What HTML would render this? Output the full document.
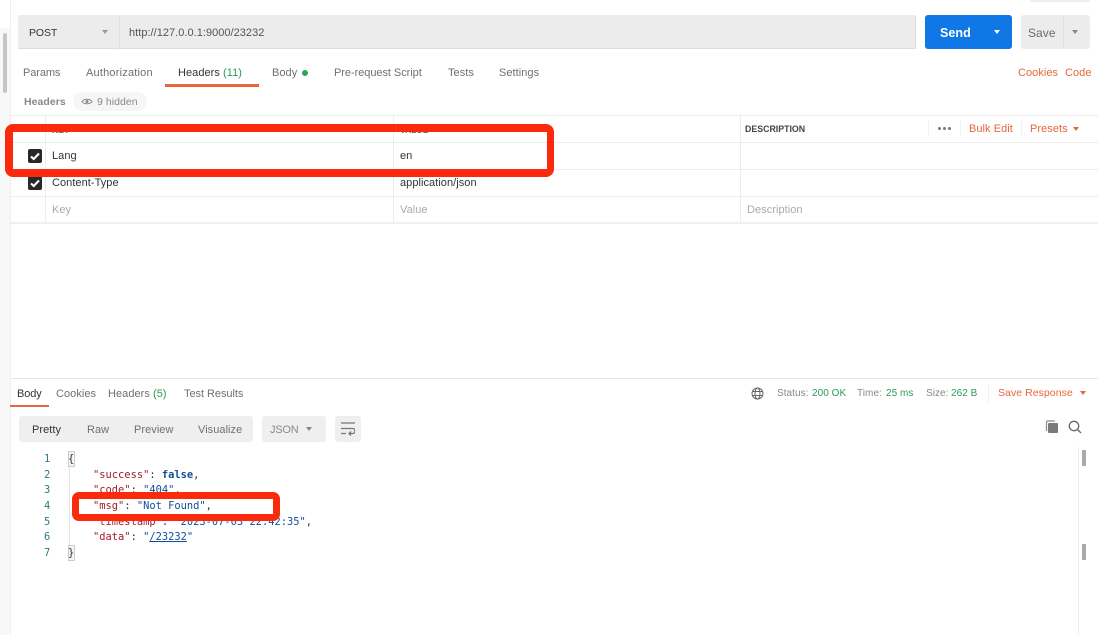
<!DOCTYPE html>
<html><head><meta charset="utf-8"><style>
html,body{margin:0;padding:0;background:#fff}
body{position:relative;width:1098px;height:635px;overflow:hidden;font-family:"Liberation Sans",sans-serif;font-size:11px;color:#707070}
#w{position:absolute;left:0;top:0;width:1098px;height:635px;overflow:hidden;filter:blur(.3px)}
.t{position:absolute;white-space:nowrap;line-height:14px;letter-spacing:.05px}
.b{position:absolute}
.o{color:#e9663c}.g{color:#2a9a5c}.d{color:#333}.h{color:#aaa}
.c{position:absolute;left:68px;white-space:pre;font:10.4px/14px "DejaVu Sans Mono",monospace;color:#333}
.n{position:absolute;white-space:pre;font:10.4px/14px "DejaVu Sans Mono",monospace;color:#2d7a85;left:44px}
.k{color:#a31b25}.s{color:#0e4f96}.f{color:#0e4f96;font-weight:bold}
.tri{position:absolute;width:0;height:0;border-left:3.5px solid transparent;border-right:3.5px solid transparent;border-top:4.5px solid #888}
.chk{position:absolute;left:28px;width:14px;height:14px;background:#282828;border-radius:2px}
.line{position:absolute;background:#ececec}
</style></head><body><div id="w">
<div class="b" style="left:0;top:28px;width:10px;height:607px;background:#f8f8f8"></div>
<div class="b" style="left:10px;top:0;width:1px;height:635px;background:#eee"></div>
<div class="b" style="left:3px;top:33px;width:4px;height:60px;background:#c6c6c6;border-radius:2px"></div>
<div class="b" style="left:1030px;top:-2px;width:60px;height:4px;background:#eee;border-radius:2px"></div>

<!-- URL bar -->
<div class="b" style="left:18px;top:15px;width:898px;height:34px;background:#ececec;border-radius:2px;box-shadow:inset -1px -1px 0 #dcdcdc"></div>
<div class="b" style="left:119px;top:15px;width:1px;height:34px;background:#e2e2e2"></div>
<div class="t d" style="left:29px;top:26px;font-size:10.5px;letter-spacing:-.1px">POST</div>
<div class="tri" style="left:102px;top:30px;border-top-color:#999"></div>
<div class="t" style="left:129px;top:26px;color:#555;font-size:11px;letter-spacing:.03px">http://127.0.0.1:9000/23232</div>

<div class="b" style="left:925px;top:15px;width:87px;height:34px;background:#0f78e6;border-radius:3px"></div>
<div class="t" style="left:940px;top:26px;color:#fff;font-size:12.5px;font-weight:bold">Send</div>
<div class="tri" style="left:994px;top:30px;border-top-color:#fff"></div>
<div class="b" style="left:1021px;top:15px;width:69px;height:34px;background:#ececec;border-radius:3px"></div>
<div class="b" style="left:1063px;top:15px;width:1px;height:34px;background:#ddd"></div>
<div class="t" style="left:1028px;top:26px;color:#6b6b6b;font-size:12px">Save</div>
<div class="tri" style="left:1072px;top:30px;border-top-color:#888"></div>

<!-- Tabs -->
<div class="t" style="left:23px;top:66px;letter-spacing:-.1px">Params</div>
<div class="t" style="left:86px;top:66px;letter-spacing:.2px">Authorization</div>
<div class="t d" style="left:178px;top:66px">Headers <span class="g">(11)</span></div>
<div class="b" style="left:165px;top:84px;width:94px;height:3px;background:#e9663c"></div>
<div class="t" style="left:272px;top:66px">Body</div>
<div class="b" style="left:302px;top:70px;width:6px;height:6px;border-radius:50%;background:#26a85c"></div>
<div class="t" style="left:334px;top:66px;letter-spacing:-.05px">Pre-request Script</div>
<div class="t" style="left:448px;top:66px">Tests</div>
<div class="t" style="left:499px;top:66px">Settings</div>
<div class="t o" style="left:1018px;top:66px">Cookies</div>
<div class="t o" style="left:1065px;top:66px">Code</div>

<div class="t" style="left:24px;top:95px;font-weight:bold;color:#888;font-size:10.5px">Headers</div>
<div class="b" style="left:73px;top:92px;width:74px;height:19px;border-radius:10px;background:#f6f6f6"></div>
<svg class="b" style="left:81px;top:97px" width="12" height="9" viewBox="0 0 12 9"><path d="M1 4.5C3 1.5 9 1.5 11 4.5 9 7.5 3 7.5 1 4.5Z" fill="none" stroke="#888" stroke-width="1"/><circle cx="6" cy="4.5" r="1.5" fill="#888"/></svg>
<div class="t" style="left:97px;top:95px;font-size:10.5px;color:#888">9 hidden</div>

<!-- Table -->
<div class="line" style="left:11px;top:115px;width:1087px;height:1px"></div>
<div class="line" style="left:11px;top:142px;width:1087px;height:1px"></div>
<div class="line" style="left:11px;top:169px;width:1087px;height:1px"></div>
<div class="line" style="left:11px;top:196px;width:1087px;height:1px"></div>
<div class="line" style="left:11px;top:222px;width:1087px;height:2px;background:#f0f0f0"></div>
<div class="line" style="left:45px;top:115px;width:1px;height:108px"></div>
<div class="line" style="left:393px;top:115px;width:1px;height:108px"></div>
<div class="line" style="left:740px;top:115px;width:1px;height:108px"></div>
<div class="line" style="left:928px;top:120px;width:1px;height:17px;background:#f0f0f0"></div>
<div class="line" style="left:960px;top:120px;width:1px;height:17px;background:#f0f0f0"></div>
<div class="line" style="left:1021px;top:120px;width:1px;height:17px;background:#f0f0f0"></div>
<div class="t" style="left:52px;top:123px;font-size:8.5px;font-weight:bold;color:#666">KEY</div>
<div class="t" style="left:400px;top:123px;font-size:8.5px;font-weight:bold;color:#666">VALUE</div>
<div class="t" style="left:745px;top:122px;font-size:8.8px;font-weight:bold;color:#444;letter-spacing:0">DESCRIPTION</div>
<div class="b" style="left:938px;top:127px;width:3px;height:3px;border-radius:50%;background:#777;box-shadow:5px 0 #777,10px 0 #777"></div>
<div class="t o" style="left:969px;top:122px">Bulk Edit</div>
<div class="t o" style="left:1030px;top:122px">Presets</div>
<div class="tri" style="left:1073px;top:127px;border-top-color:#e9663c"></div>

<div class="chk" style="top:149px"></div>
<svg class="b" style="left:28px;top:149px" width="14" height="14"><path d="M3 7.5L5.7 10 11 4.5" fill="none" stroke="#fff" stroke-width="2.2"/></svg>
<div class="t d" style="left:52px;top:149px">Lang</div>
<div class="t d" style="left:400px;top:149px">en</div>
<div class="chk" style="top:176px"></div>
<svg class="b" style="left:28px;top:176px" width="14" height="14"><path d="M3 7.5L5.7 10 11 4.5" fill="none" stroke="#fff" stroke-width="2.2"/></svg>
<div class="t d" style="left:52px;top:176px">Content-Type</div>
<div class="t d" style="left:400px;top:176px">application/json</div>
<div class="t h" style="left:52px;top:203px">Key</div>
<div class="t h" style="left:400px;top:203px">Value</div>
<div class="t h" style="left:747px;top:203px">Description</div>

<!-- red box 1 -->
<div class="b" style="left:5px;top:124px;width:534px;height:37px;border:8px solid #fb2a0c;border-right-width:7px;border-radius:8px"></div>

<!-- Response -->
<div class="line" style="left:10px;top:378px;width:1088px;height:1px;background:#e6e6e6"></div>
<div class="t d" style="left:17px;top:387px;letter-spacing:-.1px">Body</div>
<div class="b" style="left:10px;top:405px;width:39px;height:2px;background:#e9663c"></div>
<div class="t" style="left:56px;top:387px">Cookies</div>
<div class="t" style="left:108px;top:387px">Headers <span class="g">(5)</span></div>
<div class="t" style="left:184px;top:387px;letter-spacing:-.05px">Test Results</div>

<svg class="b" style="left:751px;top:387px" width="13" height="13" viewBox="0 0 13 13" fill="none" stroke="#666" stroke-width="1"><circle cx="6.5" cy="6.5" r="5.5"/><ellipse cx="6.5" cy="6.5" rx="2.5" ry="5.5"/><path d="M1.5 4.5H11.5M1.5 8.5H11.5"/></svg>
<div class="t" style="left:777px;top:387px;font-size:10px;color:#888">Status:</div>
<div class="t g" style="left:812px;top:387px;font-size:10px">200 OK</div>
<div class="t" style="left:857px;top:387px;font-size:10px;color:#888">Time:</div>
<div class="t g" style="left:886px;top:387px;font-size:10px">25 ms</div>
<div class="t" style="left:926px;top:387px;font-size:10px;color:#888">Size:</div>
<div class="t g" style="left:951px;top:387px;font-size:10px">262 B</div>
<div class="line" style="left:988px;top:384px;width:1px;height:18px;background:#f0f0f0"></div>
<div class="t o" style="left:998px;top:386px;font-size:10.5px">Save Response</div>
<div class="tri" style="left:1079.5px;top:391px;border-top-color:#e9663c"></div>

<!-- toolbar -->
<div class="b" style="left:19px;top:416px;width:234px;height:26px;background:#efefef;border-radius:3px"></div>
<div class="t d" style="left:32px;top:423px">Pretty</div>
<div class="t" style="left:87px;top:423px">Raw</div>
<div class="t" style="left:134px;top:423px">Preview</div>
<div class="t" style="left:198px;top:423px">Visualize</div>
<div class="b" style="left:262px;top:416px;width:64px;height:26px;background:#efefef;border-radius:3px"></div>
<div class="t" style="left:270px;top:423px;color:#888;letter-spacing:-.2px">JSON</div>
<div class="tri" style="left:306px;top:427px;border-top-color:#888"></div>
<div class="b" style="left:335px;top:416px;width:26px;height:26px;background:#efefef;border-radius:3px"></div>
<svg class="b" style="left:341px;top:421px" width="14" height="15" viewBox="0 0 14 15" fill="none" stroke="#777" stroke-width="1.3"><path d="M0 2H14M0 7.5H12C14.5 7.5 14.5 12.5 12 12.5H8M10 10.5L8 12.5 10 14.5M0 12.5H5"/></svg>
<svg class="b" style="left:1045px;top:420px" width="14" height="14" viewBox="0 0 14 14"><path d="M1.5 11V2.5Q1.5 1 3 1H10" fill="none" stroke="#888" stroke-width="1.2"/><rect x="3" y="3" width="10" height="10" rx="1" fill="#7a7a7a"/></svg>
<svg class="b" style="left:1068px;top:420px" width="14" height="14" viewBox="0 0 14 14" fill="none" stroke="#666" stroke-width="1.3"><circle cx="6" cy="6" r="4.7"/><path d="M9.5 9.5L13 13"/></svg>

<!-- code -->
<div class="n" style="top:452px">1</div>
<div class="n" style="top:468px">2</div>
<div class="n" style="top:483px">3</div>
<div class="n" style="top:499px">4</div>
<div class="n" style="top:515px">5</div>
<div class="n" style="top:530px">6</div>
<div class="n" style="top:546px">7</div>
<div class="b" style="left:69px;top:459px;width:1px;height:92px;background:#e5e5e5"></div>
<div class="b" style="left:68px;top:451px;width:5px;height:14px;border:1px solid #ccc;background:#f4f4f4"></div>
<div class="b" style="left:68px;top:545px;width:5px;height:14px;border:1px solid #ccc;background:#f4f4f4"></div>
<div class="c" style="top:452px">{</div>
<div class="c" style="top:468px">    <span class="k">"success"</span>: <span class="f">false</span>,</div>
<div class="c" style="top:483px">    <span class="k">"code"</span>: <span class="s">"404"</span>,</div>
<div class="c" style="top:515px">    <span class="k">"timestamp"</span>: <span class="s">"2023-07-03 22:42:35"</span>,</div>
<div class="c" style="top:530px">    <span class="k">"data"</span>: <span class="s">"<u>/23232</u>"</span></div>
<div class="c" style="top:546px">}</div>

<!-- red box 2 -->
<div class="b" style="left:72px;top:492px;width:194px;height:15px;border:7px solid #fb2a0c;border-radius:7px;background:#fff"></div>
<div class="c" style="top:499px">    <span class="k">"msg"</span>: <span class="s">"Not Found"</span>,</div>

<div class="b" style="left:1078px;top:447px;width:1px;height:188px;background:#eee"></div>
<div class="b" style="left:1082px;top:450px;width:4px;height:16px;background:#aaa"></div>
<div class="b" style="left:1082px;top:544px;width:4px;height:16px;background:#aaa"></div>
</div></body></html>
